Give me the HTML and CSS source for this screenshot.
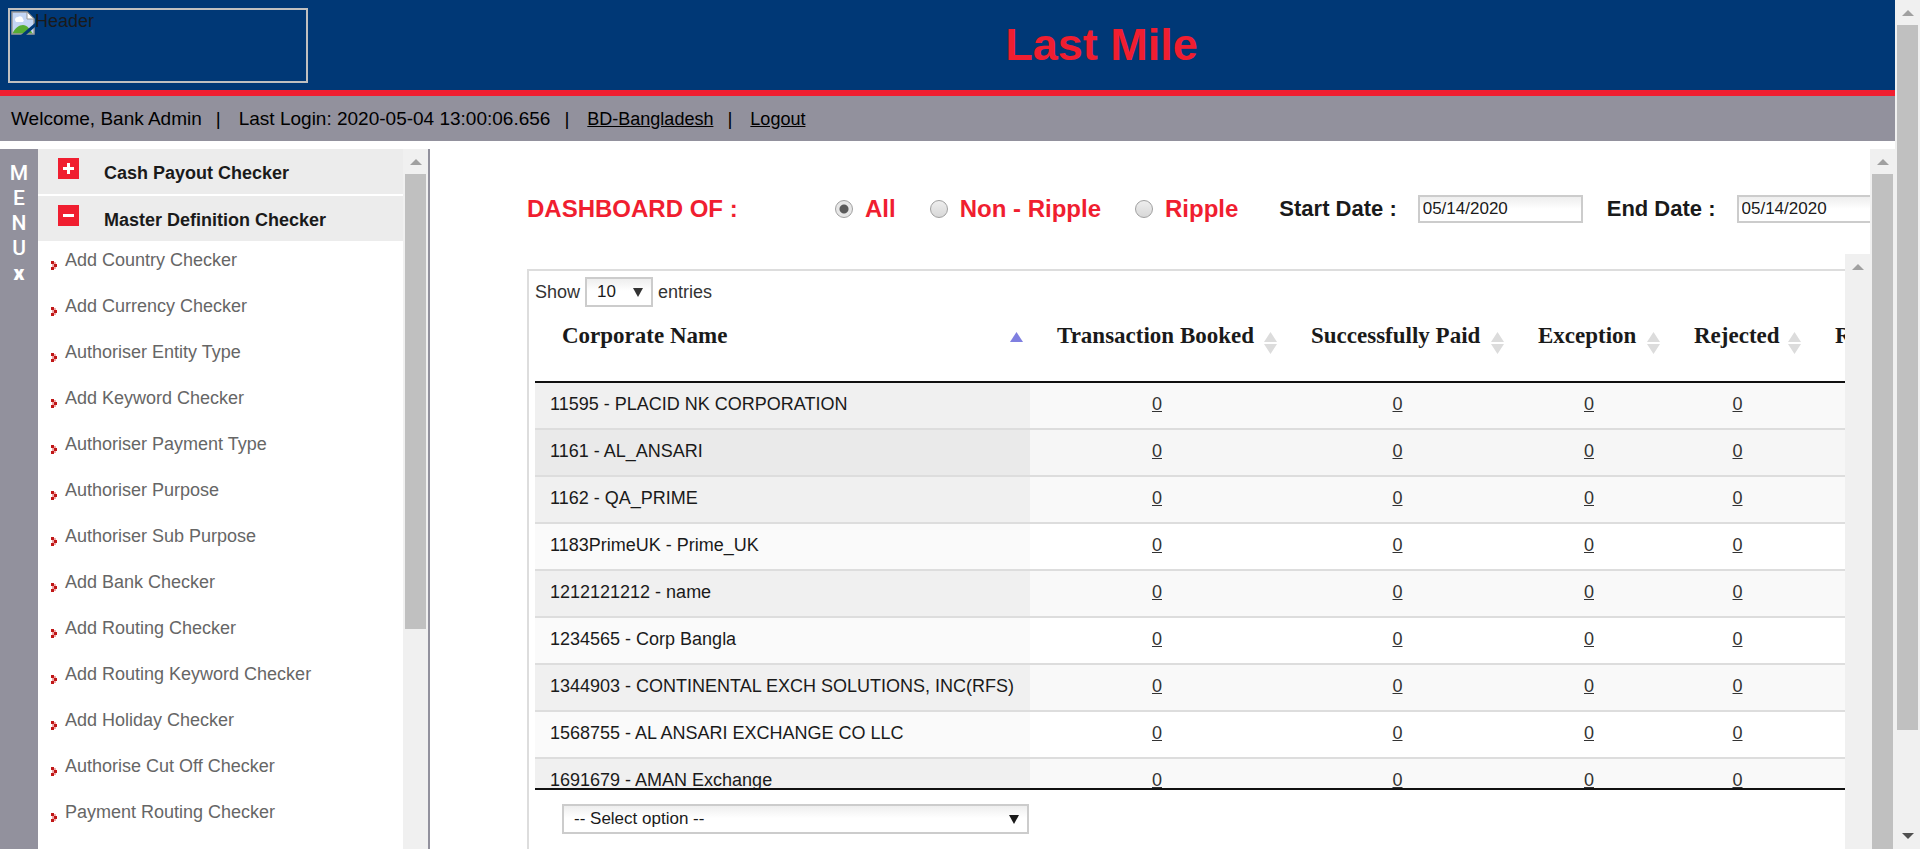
FILE: index.html
```html
<!DOCTYPE html>
<html lang="en">
<head>
<meta charset="utf-8">
<title>Last Mile</title>
<link rel="stylesheet" href="styles.css">
</head>
<body>
<svg class="defs" aria-hidden="true">
  <symbol id="up" viewBox="0 0 12 6"><path d="M0 6L6 0L12 6Z" fill="currentColor"/></symbol>
  <symbol id="down" viewBox="0 0 12 6"><path d="M0 0L6 6L12 0Z" fill="currentColor"/></symbol>
  <symbol id="arrow" viewBox="0 0 10 9"><path d="M0 0H10L5 9Z" fill="currentColor"/></symbol>
  <symbol id="sort" viewBox="0 0 13 22"><path d="M6.500 0L13 10H0Z M0 12H13L6.500 22Z" fill="#dcdcdc"/></symbol>
  <symbol id="asc" viewBox="0 0 13 22"><path d="M6.500 0L13 10H0Z" fill="#7f7fe0"/></symbol>
  <symbol id="bullet" viewBox="0 0 6 9"><path d="M0 0h3v3h-3z M0 6h3v3h-3z M3 3h3v3h-3z" fill="#c01818"/><path d="M3 1h2v2h-2z M3 6h2v2h-2z M1 3h2v3h-2z" fill="#f0a8a8"/></symbol>
</svg>
<div class="page">
  <div class="content">
    <header class="header">
      <div class="logo">
        <svg class="broken" viewBox="0 0 24 24" aria-hidden="true">
          <path d="M1 1H16L23 8V23H1Z" fill="#c4d6f4"/>
          <path d="M4 9a3 3 0 0 1 3-3a3 3 0 0 1 5 2a2 2 0 0 1 0 3H5z" fill="#fff"/>
          <path d="M1 23C4 17 8 14 12 14S19 18 22 23Z" fill="#56ad33"/>
          <path d="M1 1H16L23 8V23H1Z" fill="none" stroke="#9a9a9a" stroke-width="1.500"/>
          <path d="M16 1V8H23Z" fill="#fff" stroke="#9a9a9a"/>
          <path d="M10 24L24 12V16L15 24Z" fill="#003876"/>
        </svg>
        <span>Header</span>
      </div>
      <h1 class="brand">Last Mile</h1>
    </header>
    <nav class="userbar">
      <span>Welcome, Bank Admin</span><span class="bar">|</span>
      <span class="login">Last Login: 2020-05-04 13:00:06.656</span><span class="bar">|</span>
      <a href="#">BD-Bangladesh</a><span class="bar">|</span>
      <a href="#">Logout</a>
    </nav>
    <div class="frames">
      <button class="menu-tab" type="button"><span>M</span><span>E</span><span>N</span><span>U</span><b>x</b></button>
      <nav class="side">
        <div class="side-list">
          <button class="group" type="button"><svg viewBox="0 0 21 21"><path d="M0 0H21V21H0Z" fill="#f01e30"/><path d="M5 9h4v-4h3v4h4v3h-4v4h-3v-4h-4z" fill="#fff"/></svg>Cash Payout Checker</button>
          <button class="group" type="button"><svg viewBox="0 0 21 21"><path d="M0 0H21V21H0Z" fill="#f01e30"/><path d="M5 9h11v3h-11z" fill="#fff"/></svg>Master Definition Checker</button>
          <ul class="links">
            <li><svg><use href="#bullet"/></svg><a href="#">Add Country Checker</a></li>
            <li><svg><use href="#bullet"/></svg><a href="#">Add Currency Checker</a></li>
            <li><svg><use href="#bullet"/></svg><a href="#">Authoriser Entity Type</a></li>
            <li><svg><use href="#bullet"/></svg><a href="#">Add Keyword Checker</a></li>
            <li><svg><use href="#bullet"/></svg><a href="#">Authoriser Payment Type</a></li>
            <li><svg><use href="#bullet"/></svg><a href="#">Authoriser Purpose</a></li>
            <li><svg><use href="#bullet"/></svg><a href="#">Authoriser Sub Purpose</a></li>
            <li><svg><use href="#bullet"/></svg><a href="#">Add Bank Checker</a></li>
            <li><svg><use href="#bullet"/></svg><a href="#">Add Routing Checker</a></li>
            <li><svg><use href="#bullet"/></svg><a href="#">Add Routing Keyword Checker</a></li>
            <li><svg><use href="#bullet"/></svg><a href="#">Add Holiday Checker</a></li>
            <li><svg><use href="#bullet"/></svg><a href="#">Authorise Cut Off Checker</a></li>
            <li><svg><use href="#bullet"/></svg><a href="#">Payment Routing Checker</a></li>
          </ul>
        </div>
        <div class="scroll"><svg class="tip"><use href="#up"/></svg><div class="thumb thumb-side"></div></div>
      </nav>
      <main class="main">
        <div class="dash">
          <form class="filters">
            <h2 class="title">DASHBOARD OF :</h2>
            <label class="radio"><input type="radio" name="kind" checked>All</label>
            <label class="radio"><input type="radio" name="kind">Non - Ripple</label>
            <label class="radio"><input type="radio" name="kind">Ripple</label>
            <label class="date start">Start Date :<input type="text" value="05/14/2020"></label>
            <label class="date">End Date :<input type="text" value="05/14/2020"></label>
          </form>
          <div class="results">
            <div class="panel">
              <div class="length">
                <label for="len">Show</label>
                <span class="select small"><select id="len"><option>10</option></select><svg><use href="#arrow"/></svg></span>
                <span>entries</span>
              </div>
              <div class="table-view">
                <table>
                  <colgroup><col class="c1"><col class="c2"><col class="c3"><col class="c4"><col class="c5"><col class="c6"></colgroup>
                  <thead><tr>
                    <th><div>Corporate Name<svg><use href="#asc"/></svg></div></th>
                    <th><div>Transaction Booked<svg><use href="#sort"/></svg></div></th>
                    <th><div>Successfully Paid<svg><use href="#sort"/></svg></div></th>
                    <th><div>Exception<svg><use href="#sort"/></svg></div></th>
                    <th><div>Rejected<svg><use href="#sort"/></svg></div></th>
                    <th><div>Refunded<svg><use href="#sort"/></svg></div></th>
                  </tr></thead>
                  <tbody>
                    <tr><td>11595 - PLACID NK CORPORATION</td><td><a href="#">0</a></td><td><a href="#">0</a></td><td><a href="#">0</a></td><td><a href="#">0</a></td><td></td></tr>
                    <tr class="hover"><td>1161 - AL_ANSARI</td><td><a href="#">0</a></td><td><a href="#">0</a></td><td><a href="#">0</a></td><td><a href="#">0</a></td><td></td></tr>
                    <tr><td>1162 - QA_PRIME</td><td><a href="#">0</a></td><td><a href="#">0</a></td><td><a href="#">0</a></td><td><a href="#">0</a></td><td></td></tr>
                    <tr><td>1183PrimeUK - Prime_UK</td><td><a href="#">0</a></td><td><a href="#">0</a></td><td><a href="#">0</a></td><td><a href="#">0</a></td><td></td></tr>
                    <tr><td>1212121212 - name</td><td><a href="#">0</a></td><td><a href="#">0</a></td><td><a href="#">0</a></td><td><a href="#">0</a></td><td></td></tr>
                    <tr><td>1234565 - Corp Bangla</td><td><a href="#">0</a></td><td><a href="#">0</a></td><td><a href="#">0</a></td><td><a href="#">0</a></td><td></td></tr>
                    <tr><td>1344903 - CONTINENTAL EXCH SOLUTIONS, INC(RFS)</td><td><a href="#">0</a></td><td><a href="#">0</a></td><td><a href="#">0</a></td><td><a href="#">0</a></td><td></td></tr>
                    <tr><td>1568755 - AL ANSARI EXCHANGE CO LLC</td><td><a href="#">0</a></td><td><a href="#">0</a></td><td><a href="#">0</a></td><td><a href="#">0</a></td><td></td></tr>
                    <tr><td>1691679 - AMAN Exchange</td><td><a href="#">0</a></td><td><a href="#">0</a></td><td><a href="#">0</a></td><td><a href="#">0</a></td><td></td></tr>
                  </tbody>
                </table>
              </div>
              <div class="foot">
                <span class="select wide"><select aria-label="Corporate filter"><option>-- Select option --</option></select><svg><use href="#arrow"/></svg></span>
              </div>
            </div>
            <div class="scroll"><svg class="tip"><use href="#up"/></svg></div>
          </div>
        </div>
        <div class="scroll"><svg class="tip"><use href="#up"/></svg><div class="thumb"></div></div>
      </main>
    </div>
  </div>
  <div class="scroll"><svg class="tip"><use href="#up"/></svg><div class="thumb thumb-page"></div><svg class="tip end"><use href="#down"/></svg></div>
</div>
</body>
</html>
```
FILE: styles.css
```css
* { box-sizing: border-box; }
body { margin: 0; background: #fff; color: #1a1a1a; font: 18px/24px "Liberation Sans", Arial, sans-serif; }
h1, h2, ul { margin: 0; padding: 0; }
button, input, select { font: inherit; color: inherit; border-radius: 0; }
svg { display: block; flex: none; }
.defs { position: absolute; width: 0; height: 0; }
.page { display: flex; height: 100vh; overflow: hidden; }
.content { flex: 1; min-width: 0; display: flex; flex-direction: column; }

.scroll { flex: none; width: 25px; display: flex; flex-direction: column; align-items: center; background: #f0f0f0; }
.tip { width: 12px; height: 6px; margin: 10px 0 9px; color: #a0a0a0; }
.tip.end { margin-top: auto; margin-bottom: 10px; color: #505050; }
.thumb { width: 21px; flex: 1; background: #c0c0c0; }
.thumb-side { flex: 0 0 65%; }
.thumb-page { flex: 0 0 83%; }

.header { display: flex; height: 96px; padding: 8px; background: #003876; border-bottom: 6px solid #f01e30; }
.logo { display: flex; width: 300px; height: 75px; padding: 1px; border: 2px solid #c0c0c0; line-height: 20px; }
.broken { width: 24px; height: 24px; }
.brand { flex: 1; padding-left: 8px; text-align: center; color: #f01e30; font-size: 45px; line-height: 74px; }
.userbar { display: flex; align-items: center; height: 45px; padding-left: 11px; background: #92919d; color: #000; font-size: 19px; white-space: pre; }
.userbar a { color: #000; font-size: 18px; }
.bar { margin: 0 18px 0 14px; }

.frames { flex: 1; min-height: 0; display: flex; margin-top: 8px; }
.menu-tab { flex: none; width: 38px; display: flex; flex-direction: column; align-items: center; justify-content: flex-start; padding: 12px 0; border: 0; background: #92919d; color: #fff; font: 500 21px/25px Roboto, "Noto Sans", sans-serif; }
.menu-tab b { font-weight: 900; }
.side { flex: none; width: 392px; display: flex; border-right: 2px solid #92919d; }
.side-list { flex: 1; overflow: hidden; }
.group { display: flex; align-items: flex-start; gap: 25px; width: 100%; height: 45px; margin-bottom: 2px; padding: 9px 20px; border: 0; background: #ececec; font-weight: bold; line-height: 30px; text-align: left; }
.group svg { width: 21px; height: 21px; }
.links { list-style: none; margin-top: -2px; }
.links li { display: flex; gap: 8px; height: 46px; padding: 7px 0 0 13px; }
.links svg { width: 6px; height: 9px; margin-top: 13px; }
.links a { color: #666; text-decoration: none; }

.main { flex: 1; min-width: 0; display: flex; }
.dash { flex: 1; min-width: 0; display: flex; flex-direction: column; padding-left: 97px; overflow: hidden; }
.filters { flex: none; display: flex; align-items: center; height: 105px; padding-top: 14px; white-space: nowrap; }
.title { flex: none; width: 308px; font-size: 24px; color: #f01e30; }
.radio { flex: none; display: flex; align-items: center; gap: 12px; margin-right: 34px; color: #f01e30; font-size: 24px; font-weight: bold; }
.radio input { appearance: none; width: 18px; height: 18px; margin: 0; border: 1px solid #a0a0a0; border-radius: 50%; background: linear-gradient(#eee, #d8d8d8); }
.radio input:checked { background: radial-gradient(circle, #5a5a5a 0 4px, #e6e6e6 5px); }
.date { flex: none; display: flex; align-items: center; gap: 21px; margin-right: 24px; font-size: 22px; font-weight: bold; }
.start { margin-left: 7px; }
.date input { width: 165px; height: 28px; padding: 0 3px; border: 2px solid #ccc; background: linear-gradient(#eee, #fff 12px); font-size: 17px; font-weight: normal; }

.results { flex: 1; min-height: 0; display: flex; }
.panel { flex: 1; min-width: 0; margin-top: 15px; padding: 6px 0 0 6px; border: 2px solid #ddd; border-width: 2px 0 0 2px; overflow: hidden; }
.length { display: flex; align-items: center; gap: 5px; height: 30px; color: #333; }
.select { display: grid; grid-template-columns: 1fr 20px; align-items: center; height: 30px; }
.select select { grid-area: 1 / 1 / 2 / 3; height: 30px; width: 100%; padding: 0 10px; border: 2px solid #ccc; background: linear-gradient(#eee, #fff 12px); color: #1a1a1a; font-size: 17px; appearance: none; }
.select svg { grid-area: 1 / 2; width: 10px; height: 9px; pointer-events: none; }
.small { width: 68px; }
.wide { width: 467px; }
.table-view { height: 483px; border-bottom: 2px solid #111; overflow: hidden; }
table { width: 1440px; table-layout: fixed; border-collapse: separate; border-spacing: 0; }
.c1 { width: 495px; }
.c2 { width: 254px; }
.c3 { width: 227px; }
.c4 { width: 156px; }
.c5 { width: 141px; }
.c6 { width: 167px; }
th { height: 76px; padding: 0; border-bottom: 2px solid #111; font: bold 23px/28px "Liberation Serif", "Times New Roman", serif; }
th div { display: flex; justify-content: space-between; align-items: flex-start; height: 74px; padding: 15px 7px 0 27px; white-space: nowrap; }
th svg { width: 13px; height: 22px; margin-top: 10px; }
td { height: 47px; padding: 0 15px 4px; border-bottom: 2px solid #ddd; text-align: center; }
td a { color: #333; }
td:first-child { text-align: left; background: #fafafa; }
tbody tr:nth-child(odd) { background: #f9f9f9; }
tbody tr:nth-child(odd) td:first-child { background: #f0f0f0; }
tbody tr.hover { background: #f6f6f6; }
tbody tr.hover td:first-child { background: #eaeaea; }
.foot { padding: 14px 0 0 27px; }
```
